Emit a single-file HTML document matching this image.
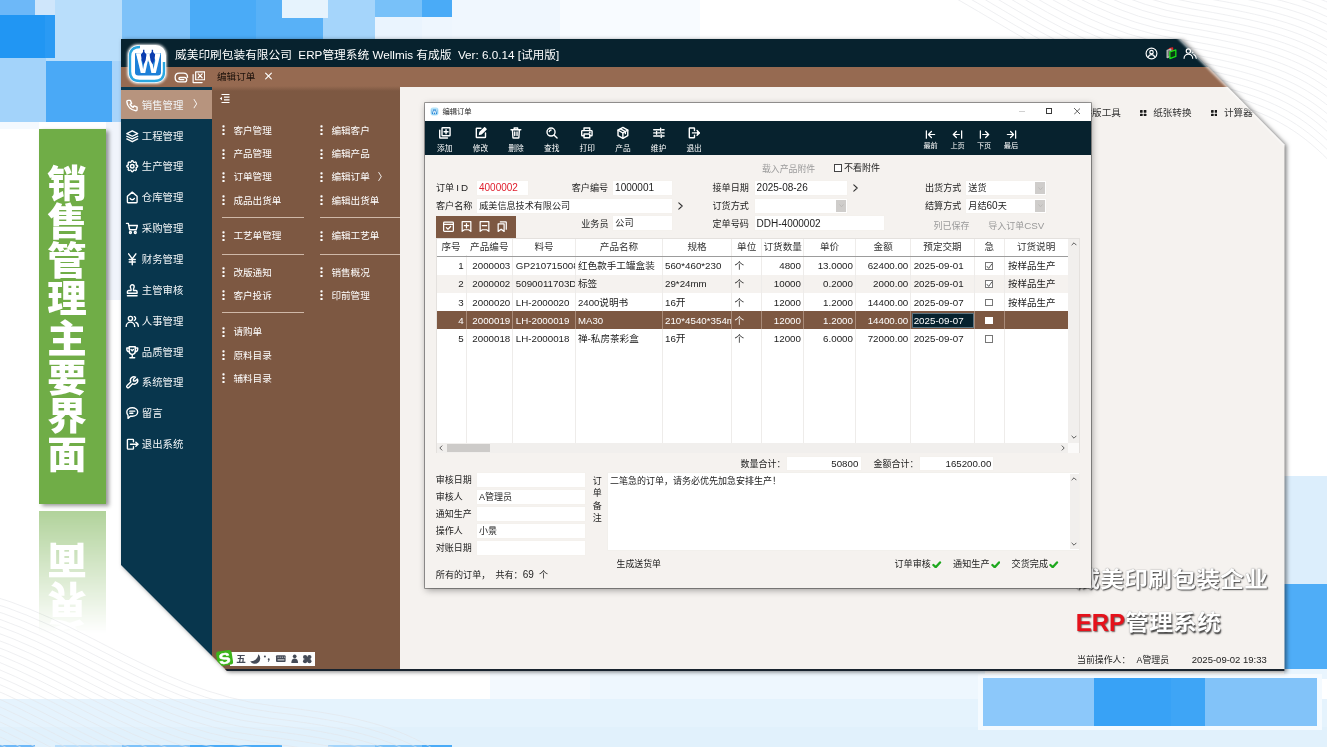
<!DOCTYPE html>
<html lang="zh-CN">
<head>
<meta charset="utf-8">
<title>销售管理主要界面</title>
<style>
*{box-sizing:border-box;margin:0;padding:0}
html,body{width:1327px;height:747px;overflow:hidden;background:#fff}
body{font-family:"Liberation Sans","Noto Sans CJK SC",sans-serif;color:#222}
#stage{position:relative;width:1327px;height:747px;overflow:hidden;background:#fff}
.a{position:absolute}
.b{position:absolute;display:block}
.sq{position:absolute}
.t{position:absolute;white-space:nowrap;line-height:14px;height:14px}
#banner{left:39px;top:129px;width:67px;height:375px;background:#70ad47;box-shadow:2.500px 2px 4px rgba(0,0,0,.4)}
.btxt{position:absolute;left:-6px;width:68px;top:33px;font-family:"Noto Sans CJK SC","Liberation Sans",sans-serif;font-weight:900;font-size:38px;line-height:38.400px;color:#fff;text-align:center;white-space:pre-line;transform:scaleX(1.04)}
#reflwrap{left:39px;top:510px;width:67px;height:130px;overflow:hidden;-webkit-mask-image:linear-gradient(to bottom,rgba(0,0,0,.55),rgba(0,0,0,0) 95%);mask-image:linear-gradient(to bottom,rgba(0,0,0,.55),rgba(0,0,0,0) 95%)}
#winshadow{left:121px;top:39px;width:1163.500px;height:632px;filter:drop-shadow(2px 1.500px 2px rgba(0,0,0,.5))}
#win{position:absolute;left:0;top:0;width:1163.500px;height:632px;background:#f5f2ef;clip-path:polygon(0 0,1059.500px 0,1163.500px 105.500px,1163.500px 632px,106px 632px,0 526px);overflow:hidden}
#tbar{left:0;top:0;width:1164px;height:28px;background:#07222e}
#tabbar{left:0;top:28px;width:1164px;height:20px;background:#966a51}
#side{left:0;top:48px;width:91px;height:584px;background:#08364d}
#sub{left:91px;top:47px;width:188px;height:585px;background:linear-gradient(to bottom,#966a51 0,#7d5842 5px)}
</style>
</head>
<body>
<div id="stage">
<div class="sq" style="left:0px;top:0px;width:35px;height:15px;background:#6db8f8"></div>
<div class="sq" style="left:35px;top:0px;width:20px;height:15px;background:#cfe6fb"></div>
<div class="sq" style="left:55px;top:0px;width:67px;height:60px;background:#b9defb"></div>
<div class="sq" style="left:0px;top:15px;width:45px;height:43px;background:#2196f3"></div>
<div class="sq" style="left:45px;top:15px;width:10px;height:43px;background:#2a9af4"></div>
<div class="sq" style="left:0px;top:58px;width:46px;height:64px;background:#a3d3fa"></div>
<div class="sq" style="left:46px;top:60px;width:66px;height:62px;background:#4aa9f6"></div>
<div class="sq" style="left:112px;top:60px;width:10px;height:62px;background:#a8d4fa"></div>
<div class="sq" style="left:46px;top:58px;width:76px;height:3px;background:#b9defb"></div>
<div class="sq" style="left:122px;top:0px;width:68px;height:40px;background:#7ec2f9"></div>
<div class="sq" style="left:190px;top:0px;width:66px;height:40px;background:#4aabf7"></div>
<div class="sq" style="left:256px;top:0px;width:26px;height:40px;background:#58b1f7"></div>
<div class="sq" style="left:282px;top:0px;width:46px;height:18px;background:#e6f3fd"></div>
<div class="sq" style="left:282px;top:18px;width:41px;height:22px;background:#58b1f7"></div>
<div class="sq" style="left:323px;top:18px;width:5px;height:22px;background:#a5d5fb"></div>
<div class="sq" style="left:328px;top:0px;width:47px;height:40px;background:#a5d5fb"></div>
<div class="sq" style="left:375px;top:0px;width:47px;height:17px;background:#78c1f9"></div>
<div class="sq" style="left:375px;top:17px;width:47px;height:23px;background:#eaf4fe"></div>
<div class="sq" style="left:422px;top:0px;width:30px;height:17px;background:#4aabf7"></div>
<div class="sq" style="left:422px;top:17px;width:30px;height:23px;background:#eef6fe"></div>
<div class="sq" style="left:452px;top:0px;width:108px;height:40px;background:#f0f7fe"></div>
<div class="sq" style="left:560px;top:0px;width:140px;height:40px;background:#f8fbff"></div>
<div class="sq" style="left:106px;top:122px;width:15px;height:178px;background:#f0f4fb"></div>
<div class="sq" style="left:0px;top:122px;width:39px;height:7px;background:#f4f9fe"></div>
<div class="sq" style="left:0px;top:699px;width:1327px;height:48px;background:#e5f3fd"></div>
<div class="sq" style="left:0px;top:727px;width:1327px;height:20px;background:#e1f1fc"></div>
<div class="sq" style="left:490px;top:670px;width:100px;height:29px;background:#f3f9fe"></div>
<div class="sq" style="left:590px;top:670px;width:395px;height:29px;background:#eef7fe"></div>
<div class="sq" style="left:1284px;top:476px;width:43px;height:108px;background:#dceefc"></div>
<div class="sq" style="left:1284px;top:584px;width:43px;height:85px;background:#4fadf7"></div>
<div class="sq" style="left:1284px;top:669px;width:43px;height:10px;background:#e9f5fe"></div>
<div class="sq" style="left:978px;top:674px;width:344px;height:56px;background:#f4faff"></div>
<div class="sq" style="left:983px;top:678px;width:111px;height:48px;background:#8cc8fa"></div>
<div class="sq" style="left:1094px;top:678px;width:77px;height:48px;background:#38a2f6"></div>
<div class="sq" style="left:1171px;top:678px;width:34px;height:48px;background:#3ea5f6"></div>
<div class="sq" style="left:1205px;top:678px;width:112px;height:48px;background:#82c3f9"></div>
<div class="sq" style="left:0px;top:745px;width:35px;height:2px;background:#6db8f8"></div>
<div class="sq" style="left:55px;top:745px;width:67px;height:2px;background:#b9defb"></div>
<div class="sq" style="left:122px;top:745px;width:68px;height:2px;background:#7ec2f9"></div>
<div class="sq" style="left:190px;top:745px;width:92px;height:2px;background:#4aabf7"></div>
<div class="sq" style="left:328px;top:745px;width:47px;height:2px;background:#a5d5fb"></div>
<div class="sq" style="left:375px;top:745px;width:47px;height:2px;background:#78c1f9"></div>
<div class="sq" style="left:422px;top:745px;width:30px;height:2px;background:#4aabf7"></div>
<svg class="b" style="left:0;top:0" width="1327" height="747" viewBox="0 0 1327 747" fill="none" stroke="#e3e5e8" stroke-width=".8" opacity=".75"><path d="M837 -49.5C967 -19.5 1027 65.5 1147 85.5S1307 120.5 1377 220.5"/><path d="M840.4 -55.4C970.4 -25.4 1030.4 59.6 1150.4 79.6S1310.4 114.6 1380.4 214.6"/><path d="M843.8 -61.3C973.8 -31.3 1033.8 53.7 1153.8 73.7S1313.8 108.7 1383.8 208.7"/><path d="M847.2 -67.2C977.2 -37.2 1037.2 47.8 1157.2 67.8S1317.2 102.8 1387.2 202.8"/><path d="M850.6 -73.1C980.6 -43.1 1040.6 41.9 1160.6 61.9S1320.6 96.9 1390.6 196.9"/><path d="M854 -79C984 -49 1044 36 1164 56S1324 91 1394 191"/><path d="M857.4 -84.9C987.4 -54.9 1047.4 30.1 1167.4 50.1S1327.4 85.1 1397.4 185.1"/><path d="M860.8 -90.8C990.8 -60.8 1050.8 24.2 1170.8 44.2S1330.8 79.2 1400.8 179.2"/><path d="M864.2 -96.7C994.2 -66.7 1054.2 18.3 1174.2 38.3S1334.2 73.3 1404.2 173.3"/><path d="M867.6 -102.6C997.6 -72.6 1057.6 12.4 1177.6 32.4S1337.6 67.4 1407.6 167.4"/><path d="M871 -108.5C1001 -78.5 1061 6.5 1181 26.5S1341 61.5 1411 161.5"/><path d="M874.4 -114.4C1004.4 -84.4 1064.4 0.6 1184.4 20.6S1344.4 55.6 1414.4 155.6"/><path d="M877.8 -120.3C1007.8 -90.3 1067.8 -5.3 1187.8 14.7S1347.8 49.7 1417.8 149.7"/><path d="M881.2 -126.2C1011.2 -96.2 1071.2 -11.2 1191.2 8.8S1351.2 43.8 1421.2 143.8"/><path d="M884.6 -132.1C1014.6 -102.1 1074.6 -17.1 1194.6 2.9S1354.6 37.9 1424.6 137.9"/><path d="M888 -138C1018 -108 1078 -23 1198 -3S1358 32 1428 132"/><path d="M891.4 -143.9C1021.4 -113.9 1081.4 -28.9 1201.4 -8.9S1361.4 26.1 1431.4 126.1"/><path d="M894.8 -149.8C1024.8 -119.8 1084.8 -34.8 1204.8 -14.8S1364.8 20.2 1434.8 120.2"/><path d="M898.2 -155.7C1028.2 -125.7 1088.2 -40.7 1208.2 -20.7S1368.2 14.3 1438.2 114.3"/><path d="M901.6 -161.6C1031.6 -131.6 1091.6 -46.6 1211.6 -26.6S1371.6 8.4 1441.6 108.4"/><path d="M905 -167.5C1035 -137.5 1095 -52.5 1215 -32.5S1375 2.5 1445 102.5"/><path d="M908.4 -173.4C1038.4 -143.4 1098.4 -58.4 1218.4 -38.4S1378.4 -3.4 1448.4 96.6"/><path d="M911.8 -179.3C1041.8 -149.3 1101.8 -64.3 1221.8 -44.3S1381.8 -9.3 1451.8 90.7"/><path d="M915.2 -185.2C1045.2 -155.2 1105.2 -70.2 1225.2 -50.2S1385.2 -15.2 1455.2 84.8"/><path d="M918.6 -191.1C1048.6 -161.1 1108.6 -76.1 1228.6 -56.1S1388.6 -21.1 1458.6 78.9"/><path d="M922 -197C1052 -167 1112 -82 1232 -62S1392 -27 1462 73"/><path d="M925.4 -202.9C1055.4 -172.9 1115.4 -87.9 1235.4 -67.9S1395.4 -32.9 1465.4 67.1"/><path d="M928.8 -208.8C1058.8 -178.8 1118.8 -93.8 1238.8 -73.8S1398.8 -38.8 1468.8 61.2"/><path d="M932.2 -214.7C1062.2 -184.7 1122.2 -99.7 1242.2 -79.7S1402.2 -44.7 1472.2 55.3"/><path d="M935.6 -220.6C1065.6 -190.6 1125.6 -105.6 1245.6 -85.6S1405.6 -50.6 1475.6 49.4"/><path d="M939 -226.5C1069 -196.5 1129 -111.5 1249 -91.5S1409 -56.5 1479 43.5"/><path d="M942.4 -232.4C1072.4 -202.4 1132.4 -117.4 1252.4 -97.4S1412.4 -62.4 1482.4 37.6"/><path d="M945.8 -238.3C1075.8 -208.3 1135.8 -123.3 1255.8 -103.3S1415.8 -68.3 1485.8 31.7"/><path d="M949.2 -244.2C1079.2 -214.2 1139.2 -129.2 1259.2 -109.2S1419.2 -74.2 1489.2 25.8"/><path d="M952.6 -250.1C1082.6 -220.1 1142.6 -135.1 1262.6 -115.1S1422.6 -80.1 1492.6 19.9"/><path d="M956 -256C1086 -226 1146 -141 1266 -121S1426 -86 1496 14"/><path d="M959.4 -261.9C1089.4 -231.9 1149.4 -146.9 1269.4 -126.9S1429.4 -91.9 1499.4 8.1"/><path d="M962.8 -267.8C1092.8 -237.8 1152.8 -152.8 1272.8 -132.8S1432.8 -97.8 1502.8 2.2"/><path d="M966.2 -273.7C1096.2 -243.7 1156.2 -158.7 1276.2 -138.7S1436.2 -103.7 1506.2 -3.7"/><path d="M969.6 -279.6C1099.6 -249.6 1159.6 -164.6 1279.6 -144.6S1439.6 -109.6 1509.6 -9.6"/><path d="M973 -285.5C1103 -255.5 1163 -170.5 1283 -150.5S1443 -115.5 1513 -15.5"/><path d="M976.4 -291.4C1106.4 -261.4 1166.4 -176.4 1286.4 -156.4S1446.4 -121.4 1516.4 -21.4"/><path d="M979.8 -297.3C1109.8 -267.3 1169.8 -182.3 1289.8 -162.3S1449.8 -127.3 1519.8 -27.3"/><path d="M-53.8 586.3C66.2 601.3 146.2 691.3 276.2 706.3S446.2 741.3 536.2 841.3"/><path d="M-57.2 592.2C62.8 607.2 142.8 697.2 272.8 712.2S442.8 747.2 532.8 847.2"/><path d="M-60.6 598.1C59.4 613.1 139.4 703.1 269.4 718.1S439.4 753.1 529.4 853.1"/><path d="M-64 604C56 619 136 709 266 724S436 759 526 859"/><path d="M-67.4 609.9C52.6 624.9 132.6 714.9 262.6 729.9S432.6 764.9 522.6 864.9"/><path d="M-70.8 615.8C49.2 630.8 129.2 720.8 259.2 735.8S429.2 770.8 519.2 870.8"/><path d="M-74.2 621.7C45.8 636.7 125.8 726.7 255.8 741.7S425.8 776.7 515.8 876.7"/><path d="M-77.6 627.6C42.4 642.6 122.4 732.6 252.4 747.6S422.4 782.6 512.4 882.6"/><path d="M-81 633.5C39 648.5 119 738.5 249 753.5S419 788.5 509 888.5"/><path d="M-84.4 639.4C35.6 654.4 115.6 744.4 245.6 759.4S415.6 794.4 505.6 894.4"/><path d="M-87.8 645.3C32.2 660.3 112.2 750.3 242.2 765.3S412.2 800.3 502.2 900.3"/><path d="M-91.2 651.2C28.8 666.2 108.8 756.2 238.8 771.2S408.8 806.2 498.8 906.2"/><path d="M-94.6 657.1C25.4 672.1 105.4 762.1 235.4 777.1S405.4 812.1 495.4 912.1"/><path d="M-98 663C22 678 102 768 232 783S402 818 492 918"/><path d="M-101.4 668.9C18.6 683.9 98.6 773.9 228.6 788.9S398.6 823.9 488.6 923.9"/><path d="M-104.8 674.8C15.2 689.8 95.2 779.8 225.2 794.8S395.2 829.8 485.2 929.8"/><path d="M-108.2 680.7C11.8 695.7 91.8 785.7 221.8 800.7S391.8 835.7 481.8 935.7"/><path d="M-111.6 686.6C8.4 701.6 88.4 791.6 218.4 806.6S388.4 841.6 478.4 941.6"/><path d="M-115 692.5C5 707.5 85 797.5 215 812.5S385 847.5 475 947.5"/><path d="M-118.4 698.4C1.6 713.4 81.6 803.4 211.6 818.4S381.6 853.4 471.6 953.4"/><path d="M-121.8 704.3C-1.8 719.3 78.2 809.3 208.2 824.3S378.2 859.3 468.2 959.3"/><path d="M-125.2 710.2C-5.2 725.2 74.8 815.2 204.8 830.2S374.8 865.2 464.8 965.2"/><path d="M-128.6 716.1C-8.6 731.1 71.4 821.1 201.4 836.1S371.4 871.1 461.4 971.1"/><path d="M-132 722C-12 737 68 827 198 842S368 877 458 977"/><path d="M-135.4 727.9C-15.4 742.9 64.6 832.9 194.6 847.9S364.6 882.9 454.6 982.9"/><path d="M-138.8 733.8C-18.8 748.8 61.2 838.8 191.2 853.8S361.2 888.8 451.2 988.8"/><path d="M-142.2 739.7C-22.2 754.7 57.8 844.7 187.8 859.7S357.8 894.7 447.8 994.7"/><path d="M-145.6 745.6C-25.6 760.6 54.4 850.6 184.4 865.6S354.4 900.6 444.4 1000.6"/><path d="M-149 751.5C-29 766.5 51 856.5 181 871.5S351 906.5 441 1006.5"/><path d="M-152.4 757.4C-32.4 772.4 47.6 862.4 177.6 877.4S347.6 912.4 437.6 1012.4"/><path d="M-155.8 763.3C-35.8 778.3 44.2 868.3 174.2 883.3S344.2 918.3 434.2 1018.3"/><path d="M-159.2 769.2C-39.2 784.2 40.8 874.2 170.8 889.2S340.8 924.2 430.8 1024.2"/><path d="M-162.6 775.1C-42.6 790.1 37.4 880.1 167.4 895.1S337.4 930.1 427.4 1030.1"/></svg>
<div id="banner" class="a"><div class="btxt">销
售
管
理<span style="display:block;height:1.800px"></span>主
要
界
面</div></div>
<div id="reflwrap" class="a"><div class="a" style="left:0;top:375.500px;width:67px;height:375px;background:#70ad47;transform:scaleY(-1);transform-origin:50% 0"><div class="btxt">销
售
管
理<span style="display:block;height:1.800px"></span>主
要
界
面</div></div></div>
<div id="winshadow" class="a"><div id="win">
<div id="tbar" class="a"></div><div id="tabbar" class="a"></div><div id="side" class="a"></div><div id="sub" class="a"></div>
<div class="a" style="left:0;top:630px;width:1164px;height:2px;background:#18232e"></div>
<div class="t" style="left:54px;top:9px;font-size:11.700px;color:#fff">威美印刷包装有限公司&nbsp; ERP管理系统 Wellmis 有成版&nbsp; Ver: 6.0.14 [试用版]</div>
<div class="t" style="left:96px;top:31px;font-size:9.600px;color:#1c110b">编辑订单</div>
<div class="t" style="left:142.300px;top:30.300px;font-size:12.500px;color:#fff;font-family:'DejaVu Sans',sans-serif">×</div>
<div class="a" style="left:0;top:48px;width:91px;height:3px;background:#0a3a52"></div>
<div class="a" style="left:0;top:51px;width:91px;height:28.500px;background:#b7947e"></div>
<svg class="b" style="left:4.2px;top:58.6px" width="14.5" height="14.5" viewBox="0 0 24 24" fill="none" stroke="#fff" stroke-width="2.3" stroke-linecap="round" stroke-linejoin="round"><path d="M5 4h4l2 5-2.500 1.500a11 11 0 0 0 5 5L15 13l5 2v4a2 2 0 0 1-2 2A16 16 0 0 1 3 6a2 2 0 0 1 2-2z"/></svg>
<div class="t" style="left:20.800px;top:59.7px;font-size:10.400px;color:#f2f5f7">销售管理</div>
<svg class="b" style="left:4.2px;top:89.5px" width="14.5" height="14.5" viewBox="0 0 24 24" fill="none" stroke="#fff" stroke-width="2.3" stroke-linecap="round" stroke-linejoin="round"><path d="M12 3l9 4.500-9 4.500-9-4.500z"/><path d="M3 12l9 4.500 9-4.500"/><path d="M3 16.500l9 4.500 9-4.500"/></svg>
<div class="t" style="left:20.800px;top:90.6px;font-size:10.400px;color:#f2f5f7">工程管理</div>
<svg class="b" style="left:4.2px;top:120.3px" width="14.5" height="14.5" viewBox="0 0 24 24" fill="none" stroke="#fff" stroke-width="2.3" stroke-linecap="round" stroke-linejoin="round"><path d="M10.325 4.317c.426-1.756 2.924-1.756 3.350 0a1.724 1.724 0 0 0 2.573 1.066c1.543-.940 3.310.826 2.370 2.370a1.724 1.724 0 0 0 1.065 2.572c1.756.426 1.756 2.924 0 3.350a1.724 1.724 0 0 0-1.066 2.573c.940 1.543-.826 3.310-2.370 2.370a1.724 1.724 0 0 0-2.572 1.065c-.426 1.756-2.924 1.756-3.350 0a1.724 1.724 0 0 0-2.573-1.066c-1.543.940-3.310-.826-2.370-2.370a1.724 1.724 0 0 0-1.065-2.572c-1.756-.426-1.756-2.924 0-3.350a1.724 1.724 0 0 0 1.066-2.573c-.940-1.543.826-3.310 2.370-2.370 1 .608 2.296.070 2.572-1.065z"/><circle cx="12" cy="12" r="3"/></svg>
<div class="t" style="left:20.800px;top:121.4px;font-size:10.400px;color:#f2f5f7">生产管理</div>
<svg class="b" style="left:4.2px;top:151.2px" width="14.5" height="14.5" viewBox="0 0 24 24" fill="none" stroke="#fff" stroke-width="2.3" stroke-linecap="round" stroke-linejoin="round"><path d="M4 10.500l8-7 8 7V20a1 1 0 0 1-1 1H5a1 1 0 0 1-1-1z"/><path d="M8.500 14a4 4 0 0 0 7 0"/></svg>
<div class="t" style="left:20.800px;top:152.3px;font-size:10.400px;color:#f2f5f7">仓库管理</div>
<svg class="b" style="left:4.2px;top:182px" width="14.5" height="14.5" viewBox="0 0 24 24" fill="none" stroke="#fff" stroke-width="2.3" stroke-linecap="round" stroke-linejoin="round"><path d="M2.500 4h3l2.200 10.500h10.800L20.500 7.500H7"/><circle cx="9" cy="19" r="1.600"/><circle cx="17" cy="19" r="1.600"/></svg>
<div class="t" style="left:20.800px;top:183.1px;font-size:10.400px;color:#f2f5f7">采购管理</div>
<svg class="b" style="left:4.2px;top:212.9px" width="14.5" height="14.5" viewBox="0 0 24 24" fill="none" stroke="#fff" stroke-width="2.3" stroke-linecap="round" stroke-linejoin="round"><path d="M6 3l6 8.500L18 3"/><path d="M12 11.500V21"/><path d="M7 12.500h10"/><path d="M7 16.500h10"/></svg>
<div class="t" style="left:20.800px;top:214px;font-size:10.400px;color:#f2f5f7">财务管理</div>
<svg class="b" style="left:4.2px;top:243.8px" width="14.5" height="14.5" viewBox="0 0 24 24" fill="none" stroke="#fff" stroke-width="2.3" stroke-linecap="round" stroke-linejoin="round"><path d="M12 3a3.200 3.200 0 0 1 3.200 3.200c0 1.600-1.200 2.600-1.200 4.300V12.500h4a2 2 0 0 1 2 2V17H4v-2.500a2 2 0 0 1 2-2h4v-2c0-1.700-1.200-2.700-1.200-4.300A3.200 3.200 0 0 1 12 3z"/><path d="M4 21h16"/></svg>
<div class="t" style="left:20.800px;top:244.8px;font-size:10.400px;color:#f2f5f7">主管审核</div>
<svg class="b" style="left:4.2px;top:274.6px" width="14.5" height="14.5" viewBox="0 0 24 24" fill="none" stroke="#fff" stroke-width="2.3" stroke-linecap="round" stroke-linejoin="round"><circle cx="9" cy="7.500" r="3.500"/><path d="M2 20.500a7 7 0 0 1 14 0"/><path d="M15.500 4.300a3.500 3.500 0 0 1 0 6.400"/><path d="M18 14a7 7 0 0 1 4 6.500"/></svg>
<div class="t" style="left:20.800px;top:275.6px;font-size:10.400px;color:#f2f5f7">人事管理</div>
<svg class="b" style="left:4.2px;top:305.5px" width="14.5" height="14.5" viewBox="0 0 24 24" fill="none" stroke="#fff" stroke-width="2.3" stroke-linecap="round" stroke-linejoin="round"><path d="M7 3h10v7.500a5 5 0 0 1-10 0z"/><path d="M7 5H3v2a4 4 0 0 0 4 4"/><path d="M17 5h4v2a4 4 0 0 1-4 4"/><path d="M12 15.500V20"/><path d="M8 21h8"/><path d="M10 7.500l2 2 2-2"/></svg>
<div class="t" style="left:20.800px;top:306.5px;font-size:10.400px;color:#f2f5f7">品质管理</div>
<svg class="b" style="left:4.2px;top:336.3px" width="14.5" height="14.5" viewBox="0 0 24 24" fill="none" stroke="#fff" stroke-width="2.3" stroke-linecap="round" stroke-linejoin="round"><g transform="translate(24,0) scale(-1,1)"><path d="M7 10h3V7L6.500 3.500a6 6 0 0 1 8 8l6 6a2.100 2.100 0 0 1-3 3l-6-6a6 6 0 0 1-8-8L7 10"/></g></svg>
<div class="t" style="left:20.800px;top:337.4px;font-size:10.400px;color:#f2f5f7">系统管理</div>
<svg class="b" style="left:4.2px;top:367.2px" width="14.5" height="14.5" viewBox="0 0 24 24" fill="none" stroke="#fff" stroke-width="2.3" stroke-linecap="round" stroke-linejoin="round"><path d="M12 3c5 0 9 3.100 9 7s-4 7-9 7c-.900 0-1.700-.100-2.500-.300L5 20.500v-5C3.800 14.100 3 12.100 3 10c0-3.900 4-7 9-7z"/><path d="M8 8.500h8"/><path d="M8 12h5"/></svg>
<div class="t" style="left:20.800px;top:368.2px;font-size:10.400px;color:#f2f5f7">留言</div>
<svg class="b" style="left:4.2px;top:398px" width="14.5" height="14.5" viewBox="0 0 24 24" fill="none" stroke="#fff" stroke-width="2.3" stroke-linecap="round" stroke-linejoin="round"><path d="M14 8V5a1 1 0 0 0-1-1H5a1 1 0 0 0-1 1v14a1 1 0 0 0 1 1h8a1 1 0 0 0 1-1v-3"/><path d="M9 12h12"/><path d="M18 8.500l3.500 3.500-3.500 3.500"/></svg>
<div class="t" style="left:20.800px;top:399.1px;font-size:10.400px;color:#f2f5f7">退出系统</div>
<div class="t" style="left:72px;top:59px;font-size:10px;color:#fff">〉</div>
<svg class="b" style="left:101px;top:86.3px" width="3" height="10.400" viewBox="0 0 3 10.400"><rect x=".4" y=".3" width="2.200" height="2.200" rx=".7" fill="#fff"/><rect x=".4" y="4.100" width="2.200" height="2.200" rx=".7" fill="#fff"/><rect x=".4" y="7.900" width="2.200" height="2.200" rx=".7" fill="#fff"/></svg>
<div class="t" style="left:112.400px;top:84.8px;font-size:9.600px;color:#fff">客户管理</div>
<svg class="b" style="left:101px;top:109.6px" width="3" height="10.400" viewBox="0 0 3 10.400"><rect x=".4" y=".3" width="2.200" height="2.200" rx=".7" fill="#fff"/><rect x=".4" y="4.100" width="2.200" height="2.200" rx=".7" fill="#fff"/><rect x=".4" y="7.900" width="2.200" height="2.200" rx=".7" fill="#fff"/></svg>
<div class="t" style="left:112.400px;top:108.1px;font-size:9.600px;color:#fff">产品管理</div>
<svg class="b" style="left:101px;top:132.7px" width="3" height="10.400" viewBox="0 0 3 10.400"><rect x=".4" y=".3" width="2.200" height="2.200" rx=".7" fill="#fff"/><rect x=".4" y="4.100" width="2.200" height="2.200" rx=".7" fill="#fff"/><rect x=".4" y="7.900" width="2.200" height="2.200" rx=".7" fill="#fff"/></svg>
<div class="t" style="left:112.400px;top:131.2px;font-size:9.600px;color:#fff">订单管理</div>
<svg class="b" style="left:101px;top:156px" width="3" height="10.400" viewBox="0 0 3 10.400"><rect x=".4" y=".3" width="2.200" height="2.200" rx=".7" fill="#fff"/><rect x=".4" y="4.100" width="2.200" height="2.200" rx=".7" fill="#fff"/><rect x=".4" y="7.900" width="2.200" height="2.200" rx=".7" fill="#fff"/></svg>
<div class="t" style="left:112.400px;top:154.5px;font-size:9.600px;color:#fff">成品出货单</div>
<svg class="b" style="left:101px;top:191.6px" width="3" height="10.400" viewBox="0 0 3 10.400"><rect x=".4" y=".3" width="2.200" height="2.200" rx=".7" fill="#fff"/><rect x=".4" y="4.100" width="2.200" height="2.200" rx=".7" fill="#fff"/><rect x=".4" y="7.900" width="2.200" height="2.200" rx=".7" fill="#fff"/></svg>
<div class="t" style="left:112.400px;top:190.1px;font-size:9.600px;color:#fff">工艺单管理</div>
<svg class="b" style="left:101px;top:228.3px" width="3" height="10.400" viewBox="0 0 3 10.400"><rect x=".4" y=".3" width="2.200" height="2.200" rx=".7" fill="#fff"/><rect x=".4" y="4.100" width="2.200" height="2.200" rx=".7" fill="#fff"/><rect x=".4" y="7.900" width="2.200" height="2.200" rx=".7" fill="#fff"/></svg>
<div class="t" style="left:112.400px;top:226.8px;font-size:9.600px;color:#fff">改版通知</div>
<svg class="b" style="left:101px;top:251.2px" width="3" height="10.400" viewBox="0 0 3 10.400"><rect x=".4" y=".3" width="2.200" height="2.200" rx=".7" fill="#fff"/><rect x=".4" y="4.100" width="2.200" height="2.200" rx=".7" fill="#fff"/><rect x=".4" y="7.900" width="2.200" height="2.200" rx=".7" fill="#fff"/></svg>
<div class="t" style="left:112.400px;top:249.7px;font-size:9.600px;color:#fff">客户投诉</div>
<svg class="b" style="left:101px;top:287.9px" width="3" height="10.400" viewBox="0 0 3 10.400"><rect x=".4" y=".3" width="2.200" height="2.200" rx=".7" fill="#fff"/><rect x=".4" y="4.100" width="2.200" height="2.200" rx=".7" fill="#fff"/><rect x=".4" y="7.900" width="2.200" height="2.200" rx=".7" fill="#fff"/></svg>
<div class="t" style="left:112.400px;top:286.4px;font-size:9.600px;color:#fff">请购单</div>
<svg class="b" style="left:101px;top:311px" width="3" height="10.400" viewBox="0 0 3 10.400"><rect x=".4" y=".3" width="2.200" height="2.200" rx=".7" fill="#fff"/><rect x=".4" y="4.100" width="2.200" height="2.200" rx=".7" fill="#fff"/><rect x=".4" y="7.900" width="2.200" height="2.200" rx=".7" fill="#fff"/></svg>
<div class="t" style="left:112.400px;top:309.5px;font-size:9.600px;color:#fff">原料目录</div>
<svg class="b" style="left:101px;top:334.3px" width="3" height="10.400" viewBox="0 0 3 10.400"><rect x=".4" y=".3" width="2.200" height="2.200" rx=".7" fill="#fff"/><rect x=".4" y="4.100" width="2.200" height="2.200" rx=".7" fill="#fff"/><rect x=".4" y="7.900" width="2.200" height="2.200" rx=".7" fill="#fff"/></svg>
<div class="t" style="left:112.400px;top:332.8px;font-size:9.600px;color:#fff">辅料目录</div>
<svg class="b" style="left:198.8px;top:86.3px" width="3" height="10.400" viewBox="0 0 3 10.400"><rect x=".4" y=".3" width="2.200" height="2.200" rx=".7" fill="#fff"/><rect x=".4" y="4.100" width="2.200" height="2.200" rx=".7" fill="#fff"/><rect x=".4" y="7.900" width="2.200" height="2.200" rx=".7" fill="#fff"/></svg>
<div class="t" style="left:210.400px;top:84.8px;font-size:9.600px;color:#fff">编辑客户</div>
<svg class="b" style="left:198.8px;top:109.6px" width="3" height="10.400" viewBox="0 0 3 10.400"><rect x=".4" y=".3" width="2.200" height="2.200" rx=".7" fill="#fff"/><rect x=".4" y="4.100" width="2.200" height="2.200" rx=".7" fill="#fff"/><rect x=".4" y="7.900" width="2.200" height="2.200" rx=".7" fill="#fff"/></svg>
<div class="t" style="left:210.400px;top:108.1px;font-size:9.600px;color:#fff">编辑产品</div>
<svg class="b" style="left:198.8px;top:132.7px" width="3" height="10.400" viewBox="0 0 3 10.400"><rect x=".4" y=".3" width="2.200" height="2.200" rx=".7" fill="#fff"/><rect x=".4" y="4.100" width="2.200" height="2.200" rx=".7" fill="#fff"/><rect x=".4" y="7.900" width="2.200" height="2.200" rx=".7" fill="#fff"/></svg>
<div class="t" style="left:210.400px;top:131.2px;font-size:9.600px;color:#fff">编辑订单&nbsp;&nbsp;&nbsp;〉</div>
<svg class="b" style="left:198.8px;top:156px" width="3" height="10.400" viewBox="0 0 3 10.400"><rect x=".4" y=".3" width="2.200" height="2.200" rx=".7" fill="#fff"/><rect x=".4" y="4.100" width="2.200" height="2.200" rx=".7" fill="#fff"/><rect x=".4" y="7.900" width="2.200" height="2.200" rx=".7" fill="#fff"/></svg>
<div class="t" style="left:210.400px;top:154.5px;font-size:9.600px;color:#fff">编辑出货单</div>
<svg class="b" style="left:198.8px;top:191.6px" width="3" height="10.400" viewBox="0 0 3 10.400"><rect x=".4" y=".3" width="2.200" height="2.200" rx=".7" fill="#fff"/><rect x=".4" y="4.100" width="2.200" height="2.200" rx=".7" fill="#fff"/><rect x=".4" y="7.900" width="2.200" height="2.200" rx=".7" fill="#fff"/></svg>
<div class="t" style="left:210.400px;top:190.1px;font-size:9.600px;color:#fff">编辑工艺单</div>
<svg class="b" style="left:198.8px;top:228.3px" width="3" height="10.400" viewBox="0 0 3 10.400"><rect x=".4" y=".3" width="2.200" height="2.200" rx=".7" fill="#fff"/><rect x=".4" y="4.100" width="2.200" height="2.200" rx=".7" fill="#fff"/><rect x=".4" y="7.900" width="2.200" height="2.200" rx=".7" fill="#fff"/></svg>
<div class="t" style="left:210.400px;top:226.8px;font-size:9.600px;color:#fff">销售概况</div>
<svg class="b" style="left:198.8px;top:251.2px" width="3" height="10.400" viewBox="0 0 3 10.400"><rect x=".4" y=".3" width="2.200" height="2.200" rx=".7" fill="#fff"/><rect x=".4" y="4.100" width="2.200" height="2.200" rx=".7" fill="#fff"/><rect x=".4" y="7.900" width="2.200" height="2.200" rx=".7" fill="#fff"/></svg>
<div class="t" style="left:210.400px;top:249.7px;font-size:9.600px;color:#fff">印前管理</div>
<div class="a" style="left:100.600px;top:178.1px;width:82.300px;height:1px;background:#cfb8a8"></div>
<div class="a" style="left:100.600px;top:215.1px;width:82.300px;height:1px;background:#cfb8a8"></div>
<div class="a" style="left:100.600px;top:273.4px;width:82.300px;height:1px;background:#cfb8a8"></div>
<div class="a" style="left:199px;top:178.1px;width:80px;height:1px;background:#cfb8a8"></div>
<div class="a" style="left:199px;top:215.1px;width:80px;height:1px;background:#cfb8a8"></div>
<svg class="b" style="left:98px;top:53.500px" width="11" height="11" viewBox="0 0 22 22" fill="none" stroke="#fff" stroke-width="2.400"><path d="M5 3h16M10 8.300h11M10 13.700h11M5 19h16"/><path d="M6 7.500L1.500 11 6 14.500z" fill="#fff" stroke="none"/></svg>
<div class="a" style="left:7px;top:6.200px;width:38px;height:38px;border-radius:10.500px;background:#fff;box-shadow:0 0 2.500px .5px rgba(255,255,255,.8)"></div>
<svg class="b" style="left:7px;top:6.200px" width="38" height="38" viewBox="0 0 38 38">
<path d="M12 2C5.500 2 2 5.500 2 11.500v15c0 6 3.500 9.500 9.500 9.500h15c6 0 9.500-3.500 9.500-9.500V17" fill="none" stroke="#2aa7e1" stroke-width="2.400"/>
<path d="M7 8.200h26V27.300a3.200 3.200 0 0 1-3.200 3.200H10.200A3.200 3.200 0 0 1 7 27.300z" fill="#1d80d8"/>
<path d="M8.200 8.200h24.100l-3 10-3.500-6h-4l-1.600 5-1.600-5h-4l-3.500 6z" fill="#fff"/>
<text x="20.250" y="28.200" text-anchor="middle" font-family="Liberation Sans, sans-serif" font-weight="700" font-size="27.900" fill="#fff" textLength="24.100" lengthAdjust="spacingAndGlyphs">W</text>
<path d="M15 4.800h1.400v2.200l2.100 2.600-.9 5.900-1.900 3.700-1.900-3.700-.9-5.900 2.100-2.600z" fill="#0b3db0"/>
<path d="M23.700 4.800h1.400v2.200l2.100 2.600-.9 5.900-1.900 3.700-1.900-3.700-.9-5.900 2.100-2.600z" fill="#0b3db0"/>
</svg>
<svg class="b" style="left:52.800px;top:32.800px" width="15" height="11" viewBox="0 0 26 19" fill="none" stroke="#fff" stroke-width="2.300" stroke-linecap="round"><path d="M23.500 9c0-4-3-7-7-7H9C4.800 2 2 5.300 2 9.500S4.800 17 9 17h9c2.500 0 4-1.800 4-3.800S20.500 9.500 18 9.500H10.500c-1.200 0-2 .8-2 1.900s.8 1.900 2 1.900H17"/></svg>
<svg class="b" style="left:70.900px;top:32.200px" width="13.500" height="12.400" viewBox="0 0 24 22" fill="none" stroke="#fff" stroke-width="2.100" stroke-linecap="round" stroke-linejoin="round"><rect x="6.500" y="1.500" width="16" height="14"/><path d="M2 6.500v14h16"/><path d="M11 5l7 7M18 5l-7 7"/></svg>
<svg class="b" style="left:1024px;top:7.600px" width="13" height="13" viewBox="0 0 24 24" fill="none" stroke="#fff" stroke-width="2.100"><circle cx="12" cy="12" r="10"/><circle cx="12" cy="9.500" r="3.200"/><path d="M6 19c1-3.500 3.500-4.800 6-4.800s5 1.300 6 4.800"/></svg>
<svg class="b" style="left:1044px;top:7.500px" width="13" height="13" viewBox="0 0 24 24" fill="none" stroke-width="2.400" stroke-linejoin="round"><path d="M8 3l6-1.500V15l-6 2z" stroke="#e02020" fill="none"/><path d="M4 6l7-2v13l-7 2.500z" stroke="#bbb" fill="#777"/><path d="M9 9l11-3.500v12L9 21.500z" stroke="#18e018" fill="#0a3a12"/></svg>
<svg class="b" style="left:1062px;top:7.500px" width="14" height="13" viewBox="0 0 26 24" fill="none" stroke="#fff" stroke-width="2.200" stroke-linecap="round"><circle cx="10" cy="7.500" r="4"/><path d="M2 21a8 8 0 0 1 16 0"/><path d="M17 3.800a4 4 0 0 1 0 7.400"/><path d="M20 14a8 8 0 0 1 4.500 7"/></svg>
<div class="t" style="left:961.5px;top:67px;font-size:9.600px;color:#333">拼版工具</div>
<svg class="b" style="left:1019px;top:70.8px" width="6.500" height="6.500" viewBox="0 0 13 13"><rect x="0" y="0" width="5.300" height="5.300" rx="1" fill="#1a1a1a"/><rect x="7.500" y="0" width="5.300" height="5.300" rx="1" fill="#1a1a1a"/><rect x="0" y="7.500" width="5.300" height="5.300" rx="1" fill="#1a1a1a"/><rect x="7.500" y="7.500" width="5.300" height="5.300" rx="1" fill="#1a1a1a"/></svg>
<div class="t" style="left:1032.2px;top:67px;font-size:9.600px;color:#333">纸张转换</div>
<svg class="b" style="left:1089.8px;top:70.8px" width="6.500" height="6.500" viewBox="0 0 13 13"><rect x="0" y="0" width="5.300" height="5.300" rx="1" fill="#1a1a1a"/><rect x="7.500" y="0" width="5.300" height="5.300" rx="1" fill="#1a1a1a"/><rect x="0" y="7.500" width="5.300" height="5.300" rx="1" fill="#1a1a1a"/><rect x="7.500" y="7.500" width="5.300" height="5.300" rx="1" fill="#1a1a1a"/></svg>
<div class="t" style="left:1103px;top:67px;font-size:9.600px;color:#333">计算器</div>
<div class="t" style="left:955px;top:524px;font-family:'Noto Sans CJK SC',sans-serif;height:30px;line-height:30px;font-size:24px;color:#fff;font-weight:700;transform:scaleY(.88);transform-origin:50% 55%;text-shadow:1px 1.500px 1.500px rgba(40,40,40,.85),0 0 1px rgba(60,60,60,.6)">威美印刷包装企业</div>
<div class="t" style="left:954.7px;top:569px;font-family:'Liberation Sans','Noto Sans CJK SC',sans-serif;height:30px;line-height:30px;font-size:24px;color:#fff;font-weight:700;transform:scaleY(.88);transform-origin:50% 55%;text-shadow:1px 1.500px 1.500px rgba(40,40,40,.85),0 0 1px rgba(60,60,60,.6)"><span style="display:inline-block;transform:scaleY(1.1);color:#e5121b;font-weight:700;text-shadow:1px 1.500px 1.500px rgba(60,20,20,.7)">ERP</span>管理系统</div>
<div class="t" style="left:956.1px;top:613.7px;font-size:8.900px;color:#222">当前操作人：</div>
<div class="t" style="left:1015.5px;top:613.7px;font-size:8.900px;color:#222">A管理员</div>
<div class="t" style="left:1070.8px;top:613.7px;font-size:9.500px;color:#222">2025-09-02 19:33</div>
<svg class="b" style="left:1040px;top:-10px;filter:blur(1.200px)" width="140" height="140" viewBox="1040 -10 140 140"><path d="M1053.500 -6L1171.500 112.500" stroke="#fff" stroke-width="3.400" opacity=".7"/></svg>
<div id="dlg" class="a" style="left:303.500px;top:63.500px;width:666.300px;height:485.200px;background:#f5f2ef;box-shadow:1px 2px 7px rgba(0,0,0,.38),0 0 0 .7px rgba(40,40,40,.6)">
<div class="a" style="left:0px;top:0px;width:666.3px;height:18.5px;background:#fff"></div>
<svg class="b" style="left:5.1px;top:4.3px" width="9" height="9" viewBox="0 0 18 18" fill="none" stroke="#fff" stroke-width="2" stroke-linecap="round" stroke-linejoin="round"><rect x="1" y="1" width="16" height="16" rx="4.500" fill="#b5e4fa" stroke="none"/><path d="M3.500 5h11v7.500a2 2 0 0 1-2 2h-7a2 2 0 0 1-2-2z" fill="#2788d8" stroke="none"/><path d="M5 5.500l2 7.500 2-5.500 2 5.500 2-7.500" stroke="#fff" stroke-width="1.700" fill="none"/></svg>
<div class="t" style="left:17.9px;top:2.1px;font-size:7.3px;color:#222;">编辑订单</div>
<div class="a" style="left:594px;top:8.3px;width:6px;height:0.8px;background:#d0d0d0"></div>
<div class="a" style="left:621.8px;top:5.8px;width:6.2px;height:5.7px;border:.9px solid #3a3a3a"></div>
<svg class="b" style="left:649.3px;top:5.5px" width="6.5" height="6.5" viewBox="0 0 10 10" fill="none" stroke="#444" stroke-width="1.3" stroke-linecap="round" stroke-linejoin="round"><path d="M0.500 0.500l9 9M9.500 0.500l-9 9"/></svg>
<div class="a" style="left:0px;top:18.5px;width:666.3px;height:34px;background:#07222e"></div>
<svg class="b" style="left:13.4px;top:23.6px" width="13.8" height="13.8" viewBox="0 0 24 24" fill="none" stroke="#fff" stroke-width="2.45" stroke-linecap="round" stroke-linejoin="round"><path d="M8 3h12a1 1 0 0 1 1 1v12a1 1 0 0 1-1 1H8a1 1 0 0 1-1-1V4a1 1 0 0 1 1-1z"/><path d="M3 7.500V20a1 1 0 0 0 1 1h12.500"/><path d="M14 6.500v7M10.500 10h7"/></svg>
<div class="t" style="left:-29.7px;width:100px;text-align:center;top:39.4px;font-size:7.7px;color:#fff;">添加</div>
<svg class="b" style="left:49px;top:23.6px" width="13.8" height="13.8" viewBox="0 0 24 24" fill="none" stroke="#fff" stroke-width="2.45" stroke-linecap="round" stroke-linejoin="round"><path d="M12 4H5a1 1 0 0 0-1 1v14a1 1 0 0 0 1 1h14a1 1 0 0 0 1-1v-7"/><path d="M9.500 14.500l1-3.500 8-8 2.500 2.500-8 8z" fill="#fff"/></svg>
<div class="t" style="left:5.9px;width:100px;text-align:center;top:39.4px;font-size:7.7px;color:#fff;">修改</div>
<svg class="b" style="left:84.6px;top:23.6px" width="13.8" height="13.8" viewBox="0 0 24 24" fill="none" stroke="#fff" stroke-width="2.45" stroke-linecap="round" stroke-linejoin="round"><path d="M3.500 6.500h17"/><path d="M6 6.500l.800 13.500a1 1 0 0 0 1 1h8.400a1 1 0 0 0 1-1L18 6.500"/><path d="M9 6V3.500h6V6"/><path d="M10 10.500v6M14 10.500v6"/></svg>
<div class="t" style="left:41.5px;width:100px;text-align:center;top:39.4px;font-size:7.7px;color:#fff;">删除</div>
<svg class="b" style="left:120.3px;top:23.6px" width="13.8" height="13.8" viewBox="0 0 24 24" fill="none" stroke="#fff" stroke-width="2.45" stroke-linecap="round" stroke-linejoin="round"><circle cx="10.500" cy="10.500" r="7"/><path d="M16 16l5 5"/><path d="M7.500 9.500a3.500 3.500 0 0 1 3-2.500"/></svg>
<div class="t" style="left:77.2px;width:100px;text-align:center;top:39.4px;font-size:7.7px;color:#fff;">查找</div>
<svg class="b" style="left:155.9px;top:23.6px" width="13.8" height="13.8" viewBox="0 0 24 24" fill="none" stroke="#fff" stroke-width="2.45" stroke-linecap="round" stroke-linejoin="round"><path d="M7 8V3.500h10V8"/><path d="M7 17H4a1 1 0 0 1-1-1V9a1 1 0 0 1 1-1h16a1 1 0 0 1 1 1v7a1 1 0 0 1-1 1h-3"/><path d="M7 14h10v6.500H7z"/><path d="M16.500 11h1"/></svg>
<div class="t" style="left:112.8px;width:100px;text-align:center;top:39.4px;font-size:7.7px;color:#fff;">打印</div>
<svg class="b" style="left:191.5px;top:23.6px" width="13.8" height="13.8" viewBox="0 0 24 24" fill="none" stroke="#fff" stroke-width="2.45" stroke-linecap="round" stroke-linejoin="round"><path d="M12 2.500l8.500 4.800v9.400L12 21.500l-8.500-4.800V7.300z"/><path d="M3.500 7.300l8.500 4.900 8.500-4.900"/><path d="M12 12.200v9.300"/><path d="M7.700 4.900l8.600 4.900v3.500"/></svg>
<div class="t" style="left:148.4px;width:100px;text-align:center;top:39.4px;font-size:7.7px;color:#fff;">产品</div>
<svg class="b" style="left:227.1px;top:23.6px" width="13.8" height="13.8" viewBox="0 0 24 24" fill="none" stroke="#fff" stroke-width="2.45" stroke-linecap="round" stroke-linejoin="round"><path d="M3 6.500h10M17 6.500h4M3 12h3M10 12h11M3 17.500h11M18 17.500h3"/><path d="M15 4v5M8 9.500v5M16 15v5"/></svg>
<div class="t" style="left:184px;width:100px;text-align:center;top:39.4px;font-size:7.7px;color:#fff;">维护</div>
<svg class="b" style="left:262.7px;top:23.6px" width="13.8" height="13.8" viewBox="0 0 24 24" fill="none" stroke="#fff" stroke-width="2.45" stroke-linecap="round" stroke-linejoin="round"><path d="M13 8V4.500a1 1 0 0 0-1-1H5a1 1 0 0 0-1 1v15a1 1 0 0 0 1 1h7a1 1 0 0 0 1-1V16"/><path d="M9.500 12H21"/><path d="M17.500 8l4 4-4 4" fill="#fff"/></svg>
<div class="t" style="left:219.6px;width:100px;text-align:center;top:39.4px;font-size:7.7px;color:#fff;">退出</div>
<svg class="b" style="left:500.6px;top:26.8px" width="11" height="11" viewBox="0 0 24 24" fill="none" stroke="#fff" stroke-width="2.7" stroke-linecap="round" stroke-linejoin="round"><path d="M3 4v16"/><path d="M21 12H8"/><path d="M14 5.500L7.500 12l6.500 6.500"/></svg>
<div class="t" style="left:456.1px;width:100px;text-align:center;top:36.3px;font-size:7.2px;color:#fff;">最前</div>
<svg class="b" style="left:527.6px;top:26.8px" width="11" height="11" viewBox="0 0 24 24" fill="none" stroke="#fff" stroke-width="2.7" stroke-linecap="round" stroke-linejoin="round"><path d="M21 4v16"/><path d="M16 12H3"/><path d="M9.500 5.500L3 12l6.500 6.500"/></svg>
<div class="t" style="left:483.1px;width:100px;text-align:center;top:36.3px;font-size:7.2px;color:#fff;">上页</div>
<svg class="b" style="left:554.1px;top:26.8px" width="11" height="11" viewBox="0 0 24 24" fill="none" stroke="#fff" stroke-width="2.7" stroke-linecap="round" stroke-linejoin="round"><path d="M3 4v16"/><path d="M8 12h13"/><path d="M14.500 5.500L21 12l-6.500 6.500"/></svg>
<div class="t" style="left:509.6px;width:100px;text-align:center;top:36.3px;font-size:7.2px;color:#fff;">下页</div>
<svg class="b" style="left:581px;top:26.8px" width="11" height="11" viewBox="0 0 24 24" fill="none" stroke="#fff" stroke-width="2.7" stroke-linecap="round" stroke-linejoin="round"><path d="M21 4v16"/><path d="M3 12h13"/><path d="M10 5.500L16.500 12 10 18.500"/></svg>
<div class="t" style="left:536.5px;width:100px;text-align:center;top:36.3px;font-size:7.2px;color:#fff;">最后</div>
<div class="t" style="left:337.4px;top:59.3px;font-size:8.9px;color:#9a9a9a;">载入产品附件</div>
<div class="a" style="left:409.1px;top:61.8px;width:8px;height:8px;border:.8px solid #444;background:#fff"></div>
<div class="t" style="left:419.5px;top:58.8px;font-size:9px;color:#222;">不看附件</div>
<div class="t" style="left:11.5px;top:78.7px;font-size:9.1px;color:#222;word-spacing:-.6px">订单 <span style="font-size:9.800px">I D</span></div>
<div class="a" style="left:52.7px;top:78.8px;width:51px;height:13.7px;background:#fff;box-shadow:0 0 0 .5px #f3f0ec"></div>
<div class="t" style="left:54.5px;top:78.8px;font-size:10px;color:#e0202e;">4000002</div>
<div class="t" style="left:147.2px;top:78.7px;font-size:9.1px;color:#222;">客户编号</div>
<div class="a" style="left:188.8px;top:78.8px;width:59.2px;height:13.7px;background:#fff;box-shadow:0 0 0 .5px #f3f0ec"></div>
<div class="t" style="left:190.6px;top:78.8px;font-size:10px;color:#222;">1000001</div>
<div class="t" style="left:288px;top:78.7px;font-size:9.1px;color:#222;">接单日期</div>
<div class="a" style="left:330.3px;top:78.8px;width:92px;height:13.7px;background:#fff;box-shadow:0 0 0 .5px #f3f0ec"></div>
<div class="t" style="left:332.1px;top:78.8px;font-size:10px;color:#222;">2025-08-26</div>
<svg class="b" style="left:428.3px;top:81.7px" width="5" height="8" viewBox="0 0 5 8" fill="none" stroke="#333" stroke-width="1.1" stroke-linecap="round" stroke-linejoin="round"><path d="M.8 .8L4.200 4 .8 7.200"/></svg>
<div class="t" style="left:500.5px;top:78.7px;font-size:9.1px;color:#222;">出货方式</div>
<div class="a" style="left:541.8px;top:78.8px;width:79.6px;height:13.7px;background:#fff;box-shadow:0 0 0 .5px #f3f0ec"></div>
<div class="t" style="left:543.8px;top:78.8px;font-size:9.1px;color:#222;">送货</div>
<div class="a" style="left:610.2px;top:79.3px;width:10.7px;height:12.7px;background:#cfcdcb"></div>
<div class="t" style="left:11.5px;top:96.2px;font-size:9.1px;color:#222;">客户名称</div>
<div class="a" style="left:52.7px;top:96.5px;width:195.3px;height:13.6px;background:#fff;box-shadow:0 0 0 .5px #f3f0ec"></div>
<div class="t" style="left:54.7px;top:96.4px;font-size:9.1px;color:#222;">威美信息技术有限公司</div>
<svg class="b" style="left:253.3px;top:99.2px" width="5" height="8" viewBox="0 0 5 8" fill="none" stroke="#333" stroke-width="1.1" stroke-linecap="round" stroke-linejoin="round"><path d="M.8 .8L4.200 4 .8 7.200"/></svg>
<div class="t" style="left:288px;top:96.2px;font-size:9.1px;color:#222;">订货方式</div>
<div class="a" style="left:330.3px;top:96.5px;width:92px;height:13.6px;background:#fff;box-shadow:0 0 0 .5px #f3f0ec"></div>
<div class="a" style="left:411px;top:97px;width:10.8px;height:12.6px;background:#cfcdcb"></div>
<div class="t" style="left:500.5px;top:96.2px;font-size:9.1px;color:#222;">结算方式</div>
<div class="a" style="left:541.8px;top:96.5px;width:79.6px;height:13.6px;background:#fff;box-shadow:0 0 0 .5px #f3f0ec"></div>
<div class="t" style="left:543.8px;top:96.4px;font-size:9.1px;color:#222;">月结<span style="font-size:10px">60</span>天</div>
<div class="a" style="left:610.2px;top:97px;width:10.7px;height:12.6px;background:#cfcdcb"></div>
<div class="a" style="left:11.6px;top:113.9px;width:79.6px;height:21.4px;background:#7d5842"></div>
<svg class="b" style="left:17px;top:117.8px" width="13" height="13" viewBox="0 0 24 24" fill="none" stroke="#fff" stroke-width="2.3" stroke-linecap="round" stroke-linejoin="round"><rect x="3" y="4" width="18" height="17" rx="1.500"/><path d="M3 8h18"/><path d="M8 14l3 3 5-5"/></svg>
<svg class="b" style="left:35.5px;top:117.8px" width="13" height="13" viewBox="0 0 24 24" fill="none" stroke="#fff" stroke-width="2.3" stroke-linecap="round" stroke-linejoin="round"><path d="M4 3h16v18l-4-3H8l-4 3z"/><path d="M12 6.500v8M8 10.500h8"/></svg>
<svg class="b" style="left:53.7px;top:117.8px" width="13" height="13" viewBox="0 0 24 24" fill="none" stroke="#fff" stroke-width="2.3" stroke-linecap="round" stroke-linejoin="round"><path d="M4 3h16v18l-4-3H8l-4 3z"/><path d="M8 10.500h8"/></svg>
<svg class="b" style="left:71.6px;top:117.8px" width="13" height="13" viewBox="0 0 24 24" fill="none" stroke="#fff" stroke-width="2.3" stroke-linecap="round" stroke-linejoin="round"><path d="M4 7h11v14l-5.500-4L4 21z"/><path d="M8 3.500h10a1 1 0 0 1 1 1V17"/></svg>
<div class="t" style="left:156.7px;top:114px;font-size:9.1px;color:#222;">业务员</div>
<div class="a" style="left:188.8px;top:113.9px;width:59.2px;height:13.7px;background:#fff;box-shadow:0 0 0 .5px #f3f0ec"></div>
<div class="t" style="left:190.8px;top:113.9px;font-size:9.1px;color:#222;">公司</div>
<div class="t" style="left:288px;top:114px;font-size:9.1px;color:#222;">定单号码</div>
<div class="a" style="left:330.3px;top:113.9px;width:129.4px;height:13.7px;background:#fff;box-shadow:0 0 0 .5px #f3f0ec"></div>
<div class="t" style="left:332.1px;top:114px;font-size:10px;color:#222;">DDH-4000002</div>
<div class="t" style="left:508.9px;top:116.5px;font-size:9px;color:#9a9a9a;">列已保存</div>
<div class="t" style="left:563.7px;top:116.5px;font-size:9px;color:#9a9a9a;">导入订单<span style="font-size:9.800px">CSV</span></div>
<svg class="b" style="left:613px;top:84.2px" width="5" height="3.5" viewBox="0 0 10 7" fill="none" stroke="#b9b7b5" stroke-width="1.6" stroke-linecap="round" stroke-linejoin="round"><path d="M1.500 1.500L5 5.500 8.500 1.500"/></svg>
<svg class="b" style="left:613px;top:101.8px" width="5" height="3.5" viewBox="0 0 10 7" fill="none" stroke="#b9b7b5" stroke-width="1.6" stroke-linecap="round" stroke-linejoin="round"><path d="M1.500 1.500L5 5.500 8.500 1.500"/></svg>
<svg class="b" style="left:414px;top:101.8px" width="5" height="3.5" viewBox="0 0 10 7" fill="none" stroke="#b9b7b5" stroke-width="1.6" stroke-linecap="round" stroke-linejoin="round"><path d="M1.500 1.500L5 5.500 8.500 1.500"/></svg>
<div class="a" style="left:11px;top:135.1px;width:644.1px;height:215.6px;background:#fff;border:1px solid #e4e1de"></div>
<div class="a" style="left:12px;top:172.2px;width:631.4px;height:18.2px;background:#f5f2ef"></div>
<div class="a" style="left:12px;top:208.5px;width:631.4px;height:18px;background:#7d5842"></div>
<div class="a" style="left:41px;top:136px;width:1px;height:204.2px;background:#eeecea"></div>
<div class="a" style="left:87.6px;top:136px;width:1px;height:204.2px;background:#eeecea"></div>
<div class="a" style="left:150.5px;top:136px;width:1px;height:204.2px;background:#eeecea"></div>
<div class="a" style="left:237.6px;top:136px;width:1px;height:204.2px;background:#eeecea"></div>
<div class="a" style="left:306.5px;top:136px;width:1px;height:204.2px;background:#eeecea"></div>
<div class="a" style="left:336.9px;top:136px;width:1px;height:204.2px;background:#eeecea"></div>
<div class="a" style="left:378.5px;top:136px;width:1px;height:204.2px;background:#eeecea"></div>
<div class="a" style="left:430.5px;top:136px;width:1px;height:204.2px;background:#eeecea"></div>
<div class="a" style="left:485.9px;top:136px;width:1px;height:204.2px;background:#eeecea"></div>
<div class="a" style="left:549.2px;top:136px;width:1px;height:204.2px;background:#eeecea"></div>
<div class="a" style="left:579.3px;top:136px;width:1px;height:204.2px;background:#eeecea"></div>
<div class="a" style="left:41px;top:208.5px;width:1px;height:18px;background:#a88a78"></div>
<div class="a" style="left:87.6px;top:208.5px;width:1px;height:18px;background:#a88a78"></div>
<div class="a" style="left:150.5px;top:208.5px;width:1px;height:18px;background:#a88a78"></div>
<div class="a" style="left:237.6px;top:208.5px;width:1px;height:18px;background:#a88a78"></div>
<div class="a" style="left:306.5px;top:208.5px;width:1px;height:18px;background:#a88a78"></div>
<div class="a" style="left:336.9px;top:208.5px;width:1px;height:18px;background:#a88a78"></div>
<div class="a" style="left:378.5px;top:208.5px;width:1px;height:18px;background:#a88a78"></div>
<div class="a" style="left:430.5px;top:208.5px;width:1px;height:18px;background:#a88a78"></div>
<div class="a" style="left:485.9px;top:208.5px;width:1px;height:18px;background:#a88a78"></div>
<div class="a" style="left:549.2px;top:208.5px;width:1px;height:18px;background:#a88a78"></div>
<div class="a" style="left:579.3px;top:208.5px;width:1px;height:18px;background:#a88a78"></div>
<div class="a" style="left:40.5px;top:136.1px;width:2px;height:16.8px;background:#fff"></div>
<div class="a" style="left:12px;top:153.1px;width:631.4px;height:1px;background:#9c9c9c"></div>
<div class="t" style="left:-23.5px;width:100px;text-align:center;top:137.8px;font-size:9.6px;color:#333;">序号</div>
<div class="t" style="left:14.8px;width:100px;text-align:center;top:137.8px;font-size:9.6px;color:#333;">产品编号</div>
<div class="t" style="left:69.5px;width:100px;text-align:center;top:137.8px;font-size:9.6px;color:#333;">料号</div>
<div class="t" style="left:144.5px;width:100px;text-align:center;top:137.8px;font-size:9.6px;color:#333;">产品名称</div>
<div class="t" style="left:222.5px;width:100px;text-align:center;top:137.8px;font-size:9.6px;color:#333;">规格</div>
<div class="t" style="left:272.2px;width:100px;text-align:center;top:137.8px;font-size:9.6px;color:#333;">单位</div>
<div class="t" style="left:308.2px;width:100px;text-align:center;top:137.8px;font-size:9.6px;color:#333;">订货数量</div>
<div class="t" style="left:355px;width:100px;text-align:center;top:137.8px;font-size:9.6px;color:#333;">单价</div>
<div class="t" style="left:408.7px;width:100px;text-align:center;top:137.8px;font-size:9.6px;color:#333;">金额</div>
<div class="t" style="left:468px;width:100px;text-align:center;top:137.8px;font-size:9.6px;color:#333;">预定交期</div>
<div class="t" style="left:514.8px;width:100px;text-align:center;top:137.8px;font-size:9.6px;color:#333;">急</div>
<div class="t" style="left:561.6px;width:100px;text-align:center;top:137.8px;font-size:9.6px;color:#333;">订货说明</div>
<div class="t" style="right:627px;top:156.7px;font-size:9.75px;color:#222;">1</div>
<div class="t" style="left:47.8px;top:156.7px;font-size:9.75px;color:#222;">2000003</div>
<div class="t" style="left:91.3px;top:156.7px;width:59.2px;overflow:hidden;font-size:9.75px;color:#222">GP210715008</div>
<div class="t" style="left:153.5px;top:156.7px;font-size:9.6px;color:#222;">红色款手工罐盒装</div>
<div class="t" style="left:240.5px;top:156.7px;width:66px;overflow:hidden;font-size:9.75px;color:#222">560*460*230</div>
<div class="t" style="left:310px;top:156.7px;font-size:9.6px;color:#222;">个</div>
<div class="t" style="right:289.9px;top:156.7px;font-size:9.75px;color:#222;">4800</div>
<div class="t" style="right:237.9px;top:156.7px;font-size:9.75px;color:#222;">13.0000</div>
<div class="t" style="right:182.5px;top:156.7px;font-size:9.75px;color:#222;">62400.00</div>
<div class="t" style="left:489.2px;top:156.7px;font-size:9.75px;color:#222;">2025-09-01</div>
<div class="a" style="left:560.6px;top:159.8px;width:7.8px;height:7.8px;border:1px solid #777;background:#fff"></div>
<svg class="b" style="left:561.1px;top:160.3px" width="6.8" height="6.8" viewBox="0 0 10 10" fill="none" stroke="#444" stroke-width="1.3" stroke-linecap="round" stroke-linejoin="round"><path d="M1.500 5l2.500 3 4.500-6.500"/></svg>
<div class="t" style="left:583.5px;top:156.7px;font-size:9.5px;color:#222;">按样品生产</div>
<div class="t" style="right:627px;top:174.8px;font-size:9.75px;color:#222;">2</div>
<div class="t" style="left:47.8px;top:174.8px;font-size:9.75px;color:#222;">2000002</div>
<div class="t" style="left:91.3px;top:174.8px;width:59.2px;overflow:hidden;font-size:9.75px;color:#222">5090011703D</div>
<div class="t" style="left:153.5px;top:174.8px;font-size:9.6px;color:#222;">标签</div>
<div class="t" style="left:240.5px;top:174.8px;width:66px;overflow:hidden;font-size:9.75px;color:#222">29*24mm</div>
<div class="t" style="left:310px;top:174.8px;font-size:9.6px;color:#222;">个</div>
<div class="t" style="right:289.9px;top:174.8px;font-size:9.75px;color:#222;">10000</div>
<div class="t" style="right:237.9px;top:174.8px;font-size:9.75px;color:#222;">0.2000</div>
<div class="t" style="right:182.5px;top:174.8px;font-size:9.75px;color:#222;">2000.00</div>
<div class="t" style="left:489.2px;top:174.8px;font-size:9.75px;color:#222;">2025-09-01</div>
<div class="a" style="left:560.6px;top:177.9px;width:7.8px;height:7.8px;border:1px solid #777;background:#fff"></div>
<svg class="b" style="left:561.1px;top:178.4px" width="6.8" height="6.8" viewBox="0 0 10 10" fill="none" stroke="#444" stroke-width="1.3" stroke-linecap="round" stroke-linejoin="round"><path d="M1.500 5l2.500 3 4.500-6.500"/></svg>
<div class="t" style="left:583.5px;top:174.8px;font-size:9.5px;color:#222;">按样品生产</div>
<div class="t" style="right:627px;top:193px;font-size:9.75px;color:#222;">3</div>
<div class="t" style="left:47.8px;top:193px;font-size:9.75px;color:#222;">2000020</div>
<div class="t" style="left:91.3px;top:193px;width:59.2px;overflow:hidden;font-size:9.75px;color:#222">LH-2000020</div>
<div class="t" style="left:153.5px;top:193px;font-size:9.6px;color:#222;">2400说明书</div>
<div class="t" style="left:240.5px;top:193px;width:66px;overflow:hidden;font-size:9.75px;color:#222">16开</div>
<div class="t" style="left:310px;top:193px;font-size:9.6px;color:#222;">个</div>
<div class="t" style="right:289.9px;top:193px;font-size:9.75px;color:#222;">12000</div>
<div class="t" style="right:237.9px;top:193px;font-size:9.75px;color:#222;">1.2000</div>
<div class="t" style="right:182.5px;top:193px;font-size:9.75px;color:#222;">14400.00</div>
<div class="t" style="left:489.2px;top:193px;font-size:9.75px;color:#222;">2025-09-07</div>
<div class="a" style="left:560.6px;top:196.1px;width:7.8px;height:7.8px;border:1px solid #777;background:#fff"></div>
<div class="t" style="left:583.5px;top:193px;font-size:9.5px;color:#222;">按样品生产</div>
<div class="t" style="right:627px;top:211.1px;font-size:9.75px;color:#fff;">4</div>
<div class="t" style="left:47.8px;top:211.1px;font-size:9.75px;color:#fff;">2000019</div>
<div class="t" style="left:91.3px;top:211.1px;width:59.2px;overflow:hidden;font-size:9.75px;color:#fff">LH-2000019</div>
<div class="t" style="left:153.5px;top:211.1px;font-size:9.6px;color:#fff;">MA30</div>
<div class="t" style="left:240.5px;top:211.1px;width:66px;overflow:hidden;font-size:9.75px;color:#fff">210*4540*354mm</div>
<div class="t" style="left:310px;top:211.1px;font-size:9.6px;color:#fff;">个</div>
<div class="t" style="right:289.9px;top:211.1px;font-size:9.75px;color:#fff;">12000</div>
<div class="t" style="right:237.9px;top:211.1px;font-size:9.75px;color:#fff;">1.2000</div>
<div class="t" style="right:182.5px;top:211.1px;font-size:9.75px;color:#fff;">14400.00</div>
<div class="a" style="left:487px;top:210.1px;width:62.2px;height:15.4px;background:#07222e;border:1px solid #5d7480"></div>
<div class="t" style="left:489.2px;top:211.1px;font-size:9.75px;color:#fff;">2025-09-07</div>
<div class="a" style="left:560.8px;top:214.4px;width:7.4px;height:7.4px;background:#fff"></div>
<div class="t" style="left:583.5px;top:211.1px;font-size:9.5px;color:#fff;"></div>
<div class="t" style="right:627px;top:229.2px;font-size:9.75px;color:#222;">5</div>
<div class="t" style="left:47.8px;top:229.2px;font-size:9.75px;color:#222;">2000018</div>
<div class="t" style="left:91.3px;top:229.2px;width:59.2px;overflow:hidden;font-size:9.75px;color:#222">LH-2000018</div>
<div class="t" style="left:153.5px;top:229.2px;font-size:9.6px;color:#222;">禅-私房茶彩盒</div>
<div class="t" style="left:240.5px;top:229.2px;width:66px;overflow:hidden;font-size:9.75px;color:#222">16开</div>
<div class="t" style="left:310px;top:229.2px;font-size:9.6px;color:#222;">个</div>
<div class="t" style="right:289.9px;top:229.2px;font-size:9.75px;color:#222;">12000</div>
<div class="t" style="right:237.9px;top:229.2px;font-size:9.75px;color:#222;">6.0000</div>
<div class="t" style="right:182.5px;top:229.2px;font-size:9.75px;color:#222;">72000.00</div>
<div class="t" style="left:489.2px;top:229.2px;font-size:9.75px;color:#222;">2025-09-07</div>
<div class="a" style="left:560.6px;top:232.3px;width:7.8px;height:7.8px;border:1px solid #777;background:#fff"></div>
<div class="t" style="left:583.5px;top:229.2px;font-size:9.5px;color:#222;"></div>
<div class="a" style="left:643.4px;top:136px;width:11.1px;height:204.2px;background:#f1efed"></div>
<div class="a" style="left:12px;top:340.2px;width:642.5px;height:10px;background:#f1efed"></div>
<div class="a" style="left:643.4px;top:340.2px;width:11.1px;height:10px;background:#fbfaf9"></div>
<div class="a" style="left:22.3px;top:341.2px;width:43px;height:8px;background:#cdcbc9"></div>
<svg class="b" style="left:13.5px;top:342.2px" width="6" height="6" viewBox="0 0 10 10" fill="none" stroke="#555" stroke-width="1.6" stroke-linecap="round" stroke-linejoin="round"><path d="M6.500 1.500L3 5l3.500 3.500"/></svg>
<svg class="b" style="left:635.5px;top:342.2px" width="6" height="6" viewBox="0 0 10 10" fill="none" stroke="#555" stroke-width="1.6" stroke-linecap="round" stroke-linejoin="round"><path d="M3.500 1.500L7 5 3.500 8.500"/></svg>
<svg class="b" style="left:646px;top:138px" width="6" height="6" viewBox="0 0 10 10" fill="none" stroke="#555" stroke-width="1.6" stroke-linecap="round" stroke-linejoin="round"><path d="M1.500 6.500L5 3l3.500 3.500"/></svg>
<svg class="b" style="left:646px;top:331.5px" width="6" height="6" viewBox="0 0 10 10" fill="none" stroke="#555" stroke-width="1.6" stroke-linecap="round" stroke-linejoin="round"><path d="M1.500 3.500L5 7l3.500-3.500"/></svg>
<div class="t" style="left:316.1px;top:354px;font-size:9px;color:#222;">数量合计：</div>
<div class="a" style="left:362.7px;top:354.1px;width:73.8px;height:13.5px;background:#fff;box-shadow:0 0 0 .5px #f3f0ec"></div>
<div class="t" style="right:232.5px;top:354px;font-size:9.7px;color:#222;">50800</div>
<div class="t" style="left:449.1px;top:354px;font-size:9px;color:#222;">金额合计：</div>
<div class="a" style="left:495.1px;top:354.1px;width:73.9px;height:13.5px;background:#fff;box-shadow:0 0 0 .5px #f3f0ec"></div>
<div class="t" style="right:99.5px;top:354px;font-size:9.7px;color:#222;">165200.00</div>
<div class="t" style="left:11.3px;top:370.5px;font-size:9px;color:#222;">审核日期</div>
<div class="a" style="left:52.5px;top:370.5px;width:107.5px;height:14px;background:#fff;box-shadow:0 0 0 .5px #f3f0ec"></div>
<div class="t" style="left:11.3px;top:387.5px;font-size:9px;color:#222;">审核人</div>
<div class="a" style="left:52.5px;top:387.5px;width:107.5px;height:14px;background:#fff;box-shadow:0 0 0 .5px #f3f0ec"></div>
<div class="t" style="left:54.5px;top:387.7px;font-size:9px;color:#222;">A管理员</div>
<div class="t" style="left:11.3px;top:404.5px;font-size:9px;color:#222;">通知生产</div>
<div class="a" style="left:52.5px;top:404.5px;width:107.5px;height:14px;background:#fff;box-shadow:0 0 0 .5px #f3f0ec"></div>
<div class="t" style="left:11.3px;top:421.5px;font-size:9px;color:#222;">操作人</div>
<div class="a" style="left:52.5px;top:421.5px;width:107.5px;height:14px;background:#fff;box-shadow:0 0 0 .5px #f3f0ec"></div>
<div class="t" style="left:54.5px;top:421.7px;font-size:9px;color:#222;">小景</div>
<div class="t" style="left:11.3px;top:438.5px;font-size:9px;color:#222;">对账日期</div>
<div class="a" style="left:52.5px;top:438.5px;width:107.5px;height:14px;background:#fff;box-shadow:0 0 0 .5px #f3f0ec"></div>
<div class="t" style="left:168.3px;top:371.7px;font-size:9px;color:#222;">订</div>
<div class="t" style="left:168.3px;top:383.9px;font-size:9px;color:#222;">单</div>
<div class="t" style="left:168.3px;top:396.1px;font-size:9px;color:#222;">备</div>
<div class="t" style="left:168.3px;top:408.3px;font-size:9px;color:#222;">注</div>
<div class="a" style="left:183.2px;top:370.5px;width:471.8px;height:76.7px;background:#fff;box-shadow:0 0 0 .5px #f0ede9"></div>
<div class="a" style="left:645px;top:371.5px;width:9px;height:74.7px;background:#f1efed"></div>
<svg class="b" style="left:646.5px;top:373px" width="6" height="6" viewBox="0 0 10 10" fill="none" stroke="#555" stroke-width="1.6" stroke-linecap="round" stroke-linejoin="round"><path d="M1.500 6.500L5 3l3.500 3.500"/></svg>
<svg class="b" style="left:646.5px;top:438.5px" width="6" height="6" viewBox="0 0 10 10" fill="none" stroke="#555" stroke-width="1.6" stroke-linecap="round" stroke-linejoin="round"><path d="M1.500 3.500L5 7l3.500-3.500"/></svg>
<div class="t" style="left:185.5px;top:371.7px;font-size:9px;color:#222;">二笔急的订单，请务必优先加急安排生产！</div>
<div class="t" style="left:192.1px;top:454.5px;font-size:8.9px;color:#222;">生成送货单</div>
<div class="t" style="left:11.3px;top:465.3px;font-size:9.1px;color:#222;">所有的订单，&nbsp; 共有：<span style="font-size:10px">69</span>&nbsp; 个</div>
<div class="t" style="left:470px;top:454.9px;font-size:9.1px;color:#222;">订单审核</div>
<svg class="b" style="left:507.7px;top:458.3px" width="9.5" height="7.5" viewBox="0 0 9.500 7.500" fill="none" stroke="#1ea81e" stroke-width="2.3" stroke-linecap="round" stroke-linejoin="round"><path d="M1.400 4l2.300 2.200L8 1.400"/></svg>
<div class="t" style="left:528.6px;top:454.9px;font-size:9.1px;color:#222;">通知生产</div>
<svg class="b" style="left:566.3px;top:458.3px" width="9.5" height="7.5" viewBox="0 0 9.500 7.500" fill="none" stroke="#1ea81e" stroke-width="2.3" stroke-linecap="round" stroke-linejoin="round"><path d="M1.400 4l2.300 2.200L8 1.400"/></svg>
<div class="t" style="left:587.1px;top:454.9px;font-size:9.1px;color:#222;">交货完成</div>
<svg class="b" style="left:624.9px;top:458.3px" width="9.5" height="7.5" viewBox="0 0 9.500 7.500" fill="none" stroke="#1ea81e" stroke-width="2.3" stroke-linecap="round" stroke-linejoin="round"><path d="M1.400 4l2.300 2.200L8 1.400"/></svg>
</div>
<div class="a" style="left:108.500px;top:612.600px;width:85.500px;height:14.100px;background:#fdfdfd"></div>
<svg class="b" style="left:94px;top:609.500px" width="19" height="18" viewBox="0 0 19 18"><g transform="rotate(-9 9.500 9)"><rect x="1.800" y="1.700" width="15.600" height="14.800" rx="2.800" fill="#3cb41a"/><text x="9.600" y="14.600" text-anchor="middle" font-family="Liberation Sans, sans-serif" font-weight="700" font-size="15" fill="#fff" stroke="#fff" stroke-width=".5" textLength="11.500" lengthAdjust="spacingAndGlyphs">S</text></g></svg>
<div class="t" style="left:115.200px;top:612.800px;font-size:9.600px;font-weight:700;color:#454b57">五</div>
<svg class="b" style="left:127px;top:613px" width="68" height="14" viewBox="248 652 68 14" fill="#454b57"><path d="M258.300 654.300A5.400 5.400 0 1 1 250.200 661.200A7 7 0 0 0 258.300 654.300Z"/><circle cx="264.900" cy="656.500" r="1.050"/><path d="M268.600 658.200a1.100 1.100 0 0 1 1.100 1.100c0 1.200-.6 2.100-1.600 2.600l-.3-.5c.5-.3.700-.7.700-1.100a1.100 1.100 0 0 1 .1-2.100z"/><rect x="276" y="655.200" width="9.600" height="6.800" rx="1"/><path d="M277.600 657.200h1M279.700 657.200h1M281.800 657.200h1M283.900 657.200h.8M277.600 659.900h6.800" stroke="#fff" stroke-width=".9" fill="none"/><circle cx="294.700" cy="656.300" r="1.850"/><path d="M291.300 663c0-3.300 1.500-4.500 3.400-4.500s3.400 1.200 3.400 4.500z"/><circle cx="305.100" cy="657" r="2.100"/><circle cx="309.400" cy="657" r="2.100"/><circle cx="305.100" cy="661.200" r="2.100"/><circle cx="309.400" cy="661.200" r="2.100"/><rect x="305.100" y="657" width="4.300" height="4.200"/></svg>
</div></div>
</div>
</body>
</html>
